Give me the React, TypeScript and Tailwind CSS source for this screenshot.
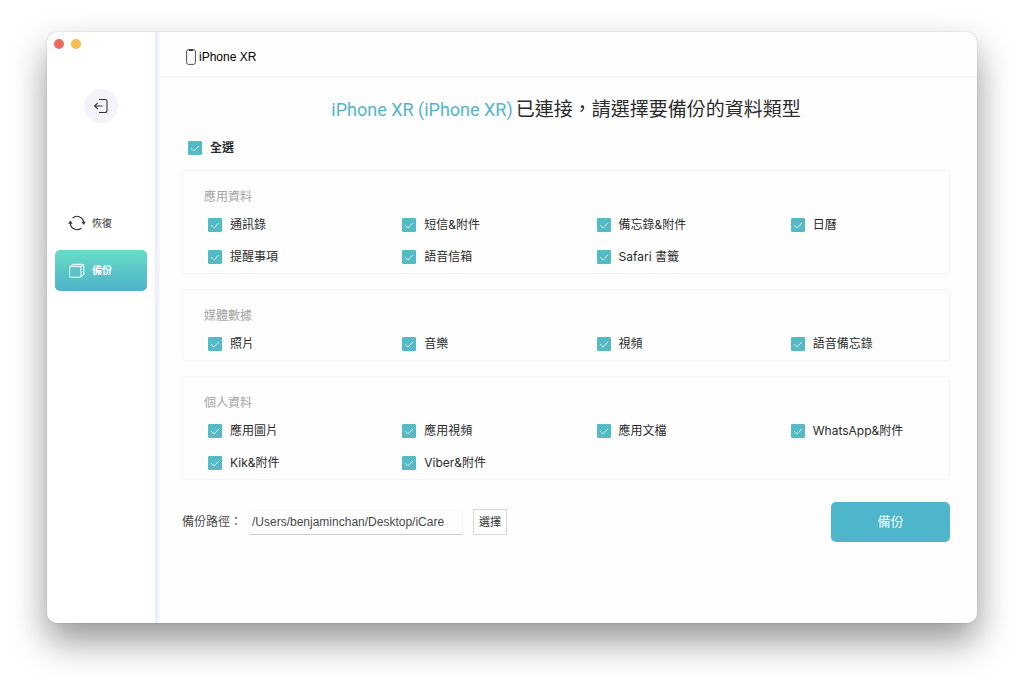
import { useState } from "react";
import type { ReactNode } from "react";

type Group = {
  title: string;
  items: string[];
};

const groups: Group[] = [
  {
    title: "應用資料",
    items: ["通訊錄", "短信&附件", "備忘錄&附件", "日曆", "提醒事項", "語音信箱", "Safari 書籤"],
  },
  {
    title: "媒體數據",
    items: ["照片", "音樂", "視頻", "語音備忘錄"],
  },
  {
    title: "個人資料",
    items: ["應用圖片", "應用視頻", "應用文檔", "WhatsApp&附件", "Kik&附件", "Viber&附件"],
  },
];

const allItems = groups.flatMap((group) => group.items);

export default function App() {
  const [selected, setSelected] = useState<string[]>(allItems);
  const [path, setPath] = useState("/Users/benjaminchan/Desktop/iCare");

  const toggle = (item: string) =>
    setSelected((prev) => (prev.includes(item) ? prev.filter((i) => i !== item) : [...prev, item]));

  const allSelected = selected.length === allItems.length;

  return (
    <div className="flex min-h-screen bg-white px-[47px] pt-8 pb-[63px] font-['Inter','Noto_Sans_CJK_TC',sans-serif] text-[#2b2b2b]">
      <div className="flex flex-1 overflow-hidden rounded-[10px] bg-white shadow-[0_0_1px_rgba(0,0,0,0.5),0_18px_36px_rgba(0,0,0,0.42)]">
        <Sidebar />

        <main className="flex min-w-0 flex-1 bg-[#fefefe]">
          <div className="w-[5px] shrink-0 bg-linear-to-r from-[#ebedf7] to-[#f8f9fd]" />
          <div className="min-w-0 flex-1">
            {/* Device tab */}
            <header className="flex h-[46px] items-center gap-[3px] border-b-2 border-[#f8f8fa] pt-1.5 pl-[26px]">
              <PhoneIcon />
              <span className="font-['Liberation_Sans',sans-serif] text-xs text-black">iPhone XR</span>
            </header>

            <div className="pt-[18px] pr-[27px] pl-[22px]">
              <h1 className="flex items-center justify-center gap-[3px] text-[19px] leading-7">
                <span className="font-['Roboto',sans-serif] text-lg leading-7 text-[#55b5c8]">
                  iPhone XR (iPhone XR)
                </span>
                <span>已連接，請選擇要備份的資料類型</span>
              </h1>

              <div className="mt-3 flex h-6 items-center pl-1.5">
                <CheckItem
                  checked={allSelected}
                  onChange={() => setSelected(allSelected ? [] : allItems)}
                >
                  <span className="font-bold">全選</span>
                </CheckItem>
              </div>

              {/* Data type groups */}
              <div className="mt-2.5 flex flex-col gap-[15px]">
                {groups.map((group) => (
                  <section key={group.title} className="rounded-[3px] border border-[#f3f3f3] pt-3.5 pl-[21px]">
                    <h2 className="text-xs leading-6 text-[#a3a3a3]">{group.title}</h2>
                    <div className="grid grid-cols-4 gap-x-9 pl-1">
                      {group.items.map((item) => (
                        <div key={item} className="flex h-8 items-center">
                          <CheckItem checked={selected.includes(item)} onChange={() => toggle(item)}>
                            {item}
                          </CheckItem>
                        </div>
                      ))}
                    </div>
                  </section>
                ))}
              </div>

              {/* Backup path */}
              <div className="mt-[22px] flex items-center">
                <label htmlFor="backup-path" className="w-[67px] shrink-0 text-xs whitespace-nowrap text-[#4a4a4a]">
                  備份路徑：
                </label>
                <input
                  id="backup-path"
                  type="text"
                  value={path}
                  onChange={(e) => setPath(e.target.value)}
                  className="h-[25px] w-[214px] border border-[#f7f7f7] border-b-[#cfcfcf] px-0.5 font-['Liberation_Sans',sans-serif] text-xs text-[#4a4a4a] outline-none"
                />
                <button type="button" className="ml-2.5 h-[26px] w-[34px] border border-[#d9d9d9] text-[11px] text-[#333]">
                  選擇
                </button>
                <button type="button" className="ml-auto h-10 w-[119px] rounded-[5px] bg-[#4db6cb] text-[13px] text-white">
                  備份
                </button>
              </div>
            </div>
          </div>
        </main>
      </div>
    </div>
  );
}

function Sidebar() {
  return (
    <aside className="w-[108px] shrink-0 bg-white">
      {/* Window controls */}
      <div className="flex gap-[7px] pt-[7px] pl-[7px]">
        <button type="button" aria-label="Close" className="size-2.5 rounded-full bg-[#ed6a5e]" />
        <button type="button" aria-label="Minimize" className="size-2.5 rounded-full bg-[#f5bd4f]" />
      </div>

      <button
        type="button"
        aria-label="Back"
        className="mx-auto mt-10 flex size-[34px] items-center justify-center rounded-full bg-[#f3f4fa]"
      >
        <ExitIcon />
      </button>

      <nav className="mx-2 mt-20 flex flex-col gap-[7px]">
        <a href="#restore" className="flex h-10 items-center gap-1.5 pl-[13px] text-[10px] text-[#333]">
          <RestoreIcon />
          恢復
        </a>
        <a
          href="#backup"
          className="flex h-[41px] items-center gap-1.5 rounded-[5px] bg-linear-to-b from-[#66ddc6] to-[#4fb1ca] pl-[13px] text-[10px] font-bold text-white"
        >
          <BackupIcon />
          備份
        </a>
      </nav>
    </aside>
  );
}

function CheckItem({
  checked,
  onChange,
  children,
}: {
  checked: boolean;
  onChange: () => void;
  children: ReactNode;
}) {
  return (
    <label className="flex items-center gap-2 text-xs whitespace-nowrap">
      <span className="relative size-3.5 shrink-0">
        <input
          type="checkbox"
          checked={checked}
          onChange={onChange}
          className="block size-3.5 appearance-none rounded-[1px] border border-[#54bac5] checked:bg-[#54bac5]"
        />
        {checked && (
          <svg viewBox="0 0 14 14" className="pointer-events-none absolute inset-0 size-3.5" fill="none">
            <path d="M3 7.2 6 10 11 4.8" stroke="#d9f3f5" strokeWidth="1" />
          </svg>
        )}
      </span>
      {children}
    </label>
  );
}

function PhoneIcon() {
  return (
    <svg width="10" height="16" viewBox="0 0 10 16" fill="none">
      <rect x="0.6" y="0.6" width="8.8" height="14.8" rx="2" stroke="#4c4c58" strokeWidth="1" />
      <path d="M2.8 0.6h4.4v0.7a0.6 0.6 0 0 1-0.6 0.6H3.4a0.6 0.6 0 0 1-0.6-0.6z" fill="#2c2c36" />
    </svg>
  );
}

function ExitIcon() {
  return (
    <svg width="16" height="16" viewBox="0 0 16 16" fill="none" stroke="#333" strokeWidth="1.1">
      <path d="M6 1.5h6a2 2 0 0 1 2 2v9a2 2 0 0 1-2 2H6" />
      <path d="M9.5 8H1.8M4.8 4.8 1.6 8l3.2 3.2" />
    </svg>
  );
}

function RestoreIcon() {
  return (
    <svg width="18" height="16" viewBox="0 0 18 16" fill="none">
      <path d="M4.6 3A6.7 6.7 0 0 1 15.7 8" stroke="#333" strokeWidth="1.2" />
      <path d="M13.4 13A6.7 6.7 0 0 1 2.3 8" stroke="#333" strokeWidth="1.2" />
      <path d="M13.4 6.8h4.4L15.7 10z" fill="#333" />
      <path d="M0.2 8.8h4.4L2.3 5.6z" fill="#333" />
    </svg>
  );
}

function BackupIcon() {
  return (
    <svg width="18" height="16" viewBox="0 0 18 16" fill="none" stroke="#e9fbfa" strokeWidth="1.1">
      <rect x="1.6" y="3.4" width="11.4" height="11" rx="1.6" />
      <path d="M2.6 3.2 4.8 1.4h9.4a1.6 1.6 0 0 1 1.6 1.6v8.4l-2.8 2.2M12.6 3.8l2.8-2" />
    </svg>
  );
}
